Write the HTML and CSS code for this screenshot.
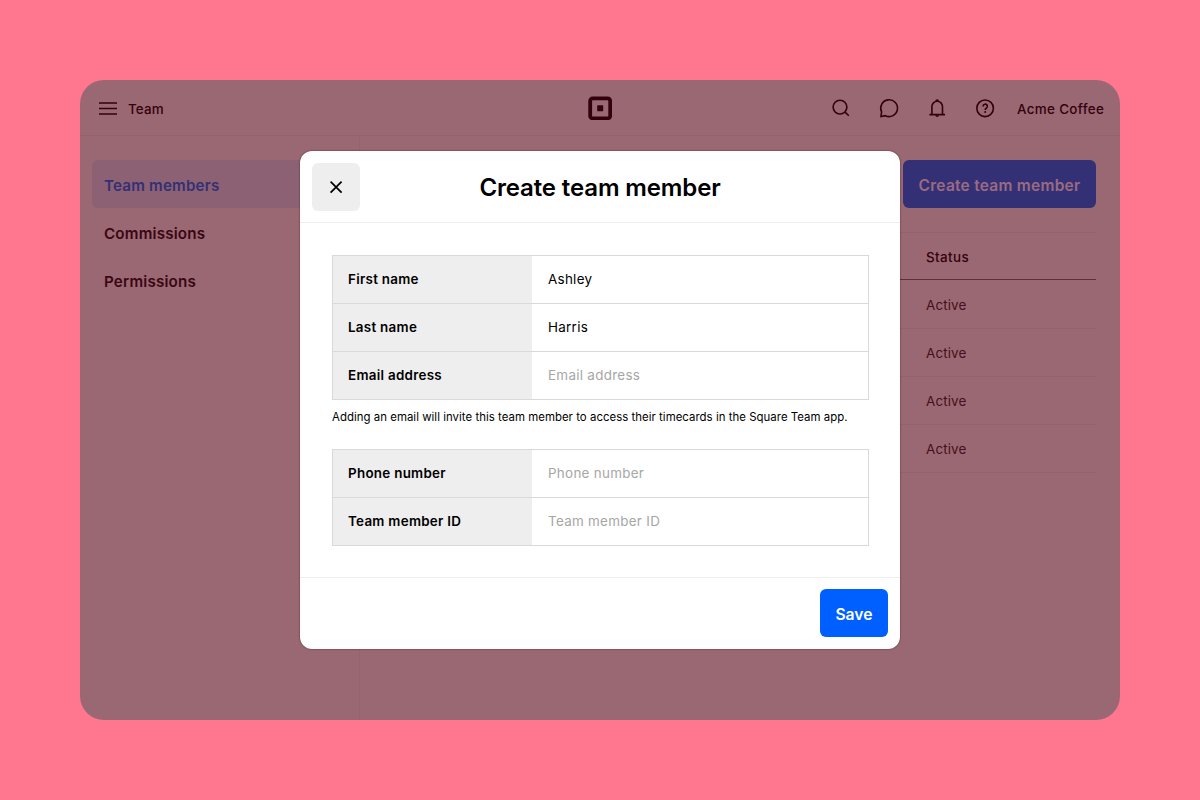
FILE: index.html
```html
<!DOCTYPE html>
<html lang="en">
<head>
<meta charset="utf-8">
<title>Create team member</title>
<link rel="stylesheet" href="styles.css">
</head>
<body>
<div class="window">
  <header class="topbar">
    <div class="topbar-left">
      <svg class="menu-icon" width="18" height="14" viewBox="0 0 18 14"><path d="M0 2h18M0 7.5h18M0 13h18" fill="none" stroke="currentColor" stroke-width="1.6"/></svg>
      <span class="label team-label">Team</span>
    </div>
    <svg class="logo" width="24" height="24" viewBox="0 0 24 24"><rect x="2.2" y="2.4" width="20" height="20" rx="2.5" fill="none" stroke="currentColor" stroke-width="3.8"/><rect x="9.2" y="9.2" width="6" height="6" rx=".6" fill="currentColor"/></svg>
    <div class="topbar-right">
      <svg width="24" height="24" viewBox="0 0 24 24"><circle cx="11" cy="11.1" r="6.9"/><path d="M15.8 15.9l4 3.9"/></svg>
      <svg width="24" height="24" viewBox="0 0 24 24"><path d="M4 20.6L4.6 15.9A8.4 8.4 0 1 1 8.4 19.7Z" stroke-linejoin="miter"/></svg>
      <svg width="24" height="24" viewBox="0 0 24 24"><path d="M4.4 18.6h15.6M6.9 18.3V10.6a5.3 5.3 0 0 1 10.6 0V18.3"/><path class="solid" d="M10.4 19.2h3.6a1.8 1.8 0 0 1-3.6 0zM10.3 5.2a1.9 1.9 0 0 1 3.8 0z"/></svg>
      <svg width="24" height="24" viewBox="0 0 24 24"><circle cx="12.1" cy="12.3" r="8.3"/><path d="M10 10.4a2.2 2.2 0 1 1 3.3 1.9c-.8.5-1.1.8-1.1 1.6"/><circle class="solid" cx="12.2" cy="16.1" r="1"/></svg>
      <span class="label account-label">Acme Coffee</span>
    </div>
  </header>
  <div class="workspace">
    <nav class="sidebar">
      <a class="nav-item active">Team members</a>
      <a class="nav-item commissions">Commissions</a>
      <a class="nav-item permissions">Permissions</a>
    </nav>
    <main class="content">
      <div class="create-button">Create team member</div>
      <div class="team-table">
        <div class="team-row head">Status</div>
        <div class="team-row">Active</div>
        <div class="team-row">Active</div>
        <div class="team-row">Active</div>
        <div class="team-row">Active</div>
      </div>
    </main>
  </div>
</div>
<section class="modal">
  <header class="modal-header">
    <div class="close"><svg width="14" height="14" viewBox="0 0 14 14"><path d="M1.6 1.6l11 11M12.6 1.6l-11 11" fill="none" stroke="#000" stroke-width="1.7"/></svg></div>
    <h1 class="modal-title">Create team member</h1>
  </header>
  <div class="modal-body">
    <div class="fields">
      <div class="field"><div class="field-label">First name</div><div class="field-value">Ashley</div></div>
      <div class="field"><div class="field-label">Last name</div><div class="field-value">Harris</div></div>
      <div class="field"><div class="field-label">Email address</div><div class="field-value placeholder">Email address</div></div>
    </div>
    <p class="hint">Adding an email will invite this team member to access their timecards in the Square Team app.</p>
    <div class="fields">
      <div class="field"><div class="field-label">Phone number</div><div class="field-value placeholder">Phone number</div></div>
      <div class="field"><div class="field-label">Team member ID</div><div class="field-value placeholder">Team member ID</div></div>
    </div>
  </div>
  <footer class="modal-footer"><div class="save">Save</div></footer>
</section>
</body>
</html>
```
FILE: styles.css
```css
* { box-sizing: border-box; }
body {
  margin: 0;
  height: 800px;
  padding: 80px;
  overflow: hidden;
  background: #ff768f;
  font-family: Inter, "Liberation Sans", sans-serif;
  color: #000;
}
.window {
  width: 1040px;
  height: 640px;
  border-radius: 24px;
  background: #9a6872;
  color: #32000d;
  overflow: hidden;
  display: flex;
  flex-direction: column;
}
.topbar {
  height: 56px;
  flex: none;
  padding: 0 16px 0 19px;
  border-bottom: 1px solid #94636d;
  display: grid;
  grid-template-columns: 489px 24px 1fr;
  align-items: center;
}
.topbar-left { display: flex; align-items: center; gap: 11px; }
.menu-icon { display: block; }
.logo { display: block; }
.topbar-right { display: flex; align-items: center; justify-content: flex-end; gap: 24px; }
.topbar-right svg { display: block; fill: none; stroke: currentColor; stroke-width: 1.6; }
.topbar-right .solid { fill: currentColor; stroke: none; }
.label {
  padding-top: 2px;
  font-size: 13.4px;
  font-weight: 500;
  line-height: 24px;
  letter-spacing: .35px;
  white-space: nowrap;
}
.team-label { letter-spacing: .15px; }
.account-label { width: 87px; margin-left: -4px; }
.workspace { flex: 1; display: flex; }
.sidebar {
  width: 280px;
  padding: 24px 12px;
  border-right: 1px solid #94636d;
}
.nav-item {
  display: block;
  height: 48px;
  padding: 0 12px;
  border-radius: 6px;
  color: #3a0614;
  font-size: 15.2px;
  font-weight: 600;
  line-height: 51px;
  letter-spacing: .18px;
}
.nav-item.active { background: #8c6174; color: #343074; }
.content {
  flex: 1;
  padding: 24px;
  display: flex;
  flex-direction: column;
  align-items: flex-end;
}
.create-button {
  width: 193px;
  height: 48px;
  border-radius: 6px;
  background: #343075;
  color: #9a6b83;
  font-size: 15.5px;
  font-weight: 600;
  line-height: 51px;
  letter-spacing: .25px;
  text-align: center;
  white-space: nowrap;
}
.team-table { width: 100%; margin-top: 24px; border-top: 1px solid #94636d; }
.team-row {
  height: 48px;
  padding-left: 542px;
  border-bottom: 1px solid #94636d;
  font-size: 13.4px;
  letter-spacing: .15px;
  line-height: 48px;
}
.team-row.head { height: 47px; border-bottom-color: #622c39; font-weight: 500; letter-spacing: .4px; }
.team-row:not(.head) { color: #450e1c; }
.team-row:nth-child(2) { height: 49px; line-height: 50px; }
.modal {
  position: absolute;
  left: 300px;
  top: 151px;
  width: 600px;
  height: 498px;
  border-radius: 12px;
  background: #fff;
  box-shadow: 0 0 2px rgba(50, 0, 13, .65);
  display: flex;
  flex-direction: column;
}
.modal-header {
  height: 72px;
  flex: none;
  padding: 0 12px;
  border-bottom: 1px solid #eee;
  display: grid;
  grid-template-columns: 48px 1fr 48px;
  align-items: center;
}
.close {
  width: 48px;
  height: 48px;
  border-radius: 6px;
  background: #eee;
  display: flex;
  align-items: center;
  justify-content: center;
}
.modal-title {
  margin: 0;
  padding-top: 2px;
  font-size: 24px;
  font-weight: 600;
  line-height: 32px;
  letter-spacing: -.13px;
  text-align: center;
  white-space: nowrap;
}
.modal-body { flex: 1; padding: 32px 31px 0 32px; }
.fields { border: 1px solid #d9d9d9; border-top: 0; }
.field {
  display: flex;
  height: 48px;
  border-top: 1px solid #d9d9d9;
  font-size: 13.4px;
  line-height: 46px;
  letter-spacing: .3px;
}
.field-label { width: 199px; padding-left: 15px; background: #eee; font-weight: 600; letter-spacing: .28px; }
.field-value { padding-left: 16px; }
.placeholder { color: #a6a6a6; }
.hint { margin: 7px 0 22px; font-size: 11.4px; line-height: 20px; letter-spacing: .04px; white-space: nowrap; }
.modal-footer {
  height: 72px;
  flex: none;
  padding: 11px 12px;
  border-top: 1px solid #eee;
  display: flex;
  justify-content: flex-end;
}
.save {
  width: 68px;
  height: 48px;
  border-radius: 6px;
  background: #005fff;
  color: #fff;
  font-size: 15.7px;
  font-weight: 600;
  line-height: 51px;
  text-align: center;
}
```
